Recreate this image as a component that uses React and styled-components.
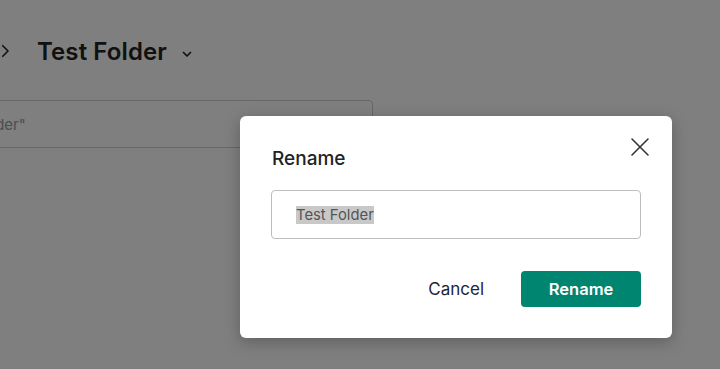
import React, { useEffect, useRef } from 'react'
import styled, { createGlobalStyle } from 'styled-components'

const GlobalStyle = createGlobalStyle`
  html, body {
    margin: 0;
    padding: 0;
    background: #ffffff;
    font-family: Inter, "Noto Sans", sans-serif;
    overflow: hidden;
  }
  ::selection {
    background: #c8c8c8;
  }
`

const Page = styled.div`
  width: 720px;
  height: 369px;
  position: relative;
  overflow: hidden;
  background: #fff;
`

const Header = styled.div`
  display: flex;
  align-items: center;
  height: 46px;
  padding-top: 28px;
`

const Crumb = styled.div`
  display: flex;
  align-items: center;
  color: #222;
  margin-left: -4px;
  width: 41px;
`

const FolderTitle = styled.h1`
  margin: 0;
  font-size: 24px;
  font-weight: 600;
  color: #222;
  letter-spacing: 0.1px;
`

const Caret = styled.span`
  display: flex;
  margin-left: 14px;
  margin-top: 6px;
  color: #222;
`

const SearchBox = styled.div`
  margin-top: 26px;
  margin-left: -68px;
  width: 441px;
  height: 48px;
  border: 1px solid #cfcfcf;
  border-radius: 4px;
  display: flex;
  align-items: center;
  box-sizing: border-box;
  font-size: 15px;
  color: #9a9a9a;
  white-space: nowrap;
`

const Overlay = styled.div`
  position: absolute;
  inset: 0;
  background: rgba(0, 0, 0, 0.5);
  display: flex;
  align-items: flex-start;
  padding: 116px 0 0 240px;
  box-sizing: border-box;
`

const Dialog = styled.div`
  width: 432px;
  height: 222px;
  background: #fff;
  border-radius: 6px;
  box-shadow: 0 4px 16px rgba(0, 0, 0, 0.25);
  box-sizing: border-box;
  padding: 30px 31px 31px 32px;
  display: flex;
  flex-direction: column;
`

const DialogHead = styled.div`
  display: flex;
  justify-content: space-between;
  align-items: flex-start;
  height: 44px;
`

const DialogTitle = styled.h2`
  margin: 1px 0 0;
  font-size: 19px;
  font-weight: 500;
  color: #222;
`

const CloseButton = styled.button`
  border: 0;
  background: none;
  padding: 0;
  margin: -14px -14px 0 0;
  color: #333;
  display: flex;
  cursor: pointer;
`

const NameInput = styled.input`
  height: 49px;
  width: 370px;
  margin-left: -1px;
  border: 1px solid #bdbdbd;
  border-radius: 4px;
  padding: 0 24px;
  box-sizing: border-box;
  font-family: Inter, "Noto Sans", sans-serif;
  font-size: 14.8px;
  color: #555;
  outline: none;
  caret-color: transparent;
`

const Actions = styled.div`
  display: flex;
  justify-content: flex-end;
  align-items: center;
  gap: 14px;
  margin-top: 32px;
`

const Button = styled.button`
  font-family: Inter, "Noto Sans", sans-serif;
  font-size: ${p => (p.$primary ? '16.5px' : '17px')};
  font-weight: ${p => (p.$primary ? 600 : 400)};
  height: 36px;
  width: ${p => (p.$primary ? '120px' : 'auto')};
  padding: ${p => (p.$primary ? '0' : '0 23px')};
  border: 0;
  border-radius: 4px;
  background: ${p => (p.$primary ? '#008571' : 'transparent')};
  color: ${p => (p.$primary ? '#fff' : '#1f2433')};
  cursor: pointer;
`

export default function App() {
  const inputRef = useRef(null)

  useEffect(() => {
    const el = inputRef.current
    if (el) {
      el.focus()
      el.setSelectionRange(0, el.value.length)
    }
  }, [])

  return (
    <Page>
      <GlobalStyle />
      <Header>
        <Crumb>
          <svg width="18" height="18" viewBox="0 0 24 24" fill="none" stroke="currentColor" strokeWidth="2.2" strokeLinecap="round" strokeLinejoin="round">
            <path d="M9 5l7 7-7 7" />
          </svg>
        </Crumb>
        <FolderTitle>Test Folder</FolderTitle>
        <Caret>
          <svg width="12" height="12" viewBox="0 0 24 24" fill="none" stroke="currentColor" strokeWidth="3.4" strokeLinecap="round" strokeLinejoin="round">
            <path d="M5 9l7 7 7-7" />
          </svg>
        </Caret>
      </Header>
      <SearchBox>"Test Folder"</SearchBox>

      <Overlay>
        <Dialog role="dialog">
          <DialogHead>
            <DialogTitle>Rename</DialogTitle>
            <CloseButton aria-label="Close">
              <svg width="30" height="30" viewBox="0 0 30 30" fill="none" stroke="currentColor" strokeWidth="1.6" strokeLinecap="round">
                <path d="M7 7l16 16M23 7L7 23" />
              </svg>
            </CloseButton>
          </DialogHead>
          <NameInput ref={inputRef} defaultValue="Test Folder" />
          <Actions>
            <Button>Cancel</Button>
            <Button $primary>Rename</Button>
          </Actions>
        </Dialog>
      </Overlay>
    </Page>
  )
}
